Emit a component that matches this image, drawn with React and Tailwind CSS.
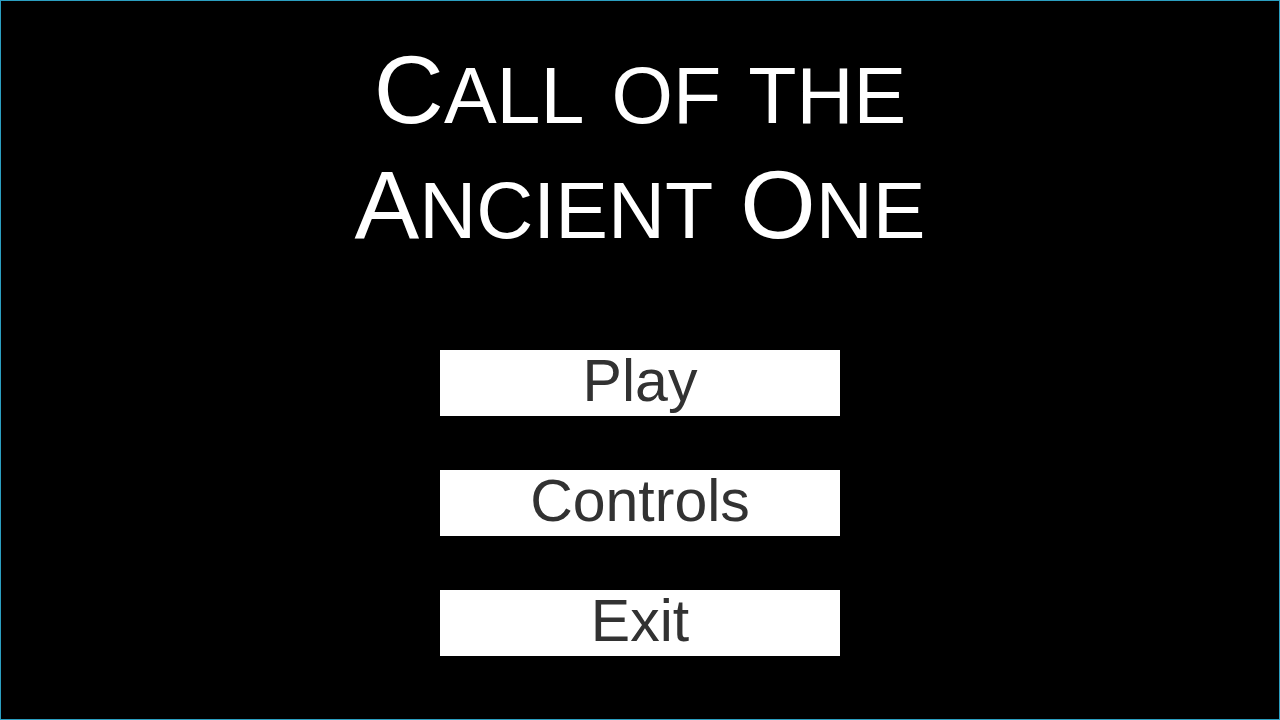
const buttons = ['Play', 'Controls', 'Exit'];

// [big, small] pairs for the small-caps title
const lines = [
  [['C', 'ALL'], [' ', 'OF'], [' ', 'THE']],
  [['A', 'NCIENT'], [' O', 'NE']],
];

export default function App() {
  return (
    <div
      className="w-[1280px] h-[720px] bg-black border border-[#2b9ec0] flex flex-col items-center text-white"
      style={{ fontFamily: '"Liberation Sans", Arial, sans-serif' }}
    >
      <div className="pt-[31px] flex flex-col items-center">
        {lines.map((line, i) => (
          <div key={i} className="text-[97px] leading-[115px] whitespace-pre">
            {line.map(([big, small], j) => (
              <span key={j}>
                {big}
                <span className="text-[79px] leading-none">{small}</span>
              </span>
            ))}
          </div>
        ))}
      </div>
      <div className="mt-[88px] flex flex-col gap-[54px]">
        {buttons.map((b) => (
          <button
            key={b}
            className="w-[400px] h-[66px] bg-white text-[#323232] text-[59px] leading-none pb-[3px] flex items-center justify-center"
          >
            {b}
          </button>
        ))}
      </div>
    </div>
  );
}
